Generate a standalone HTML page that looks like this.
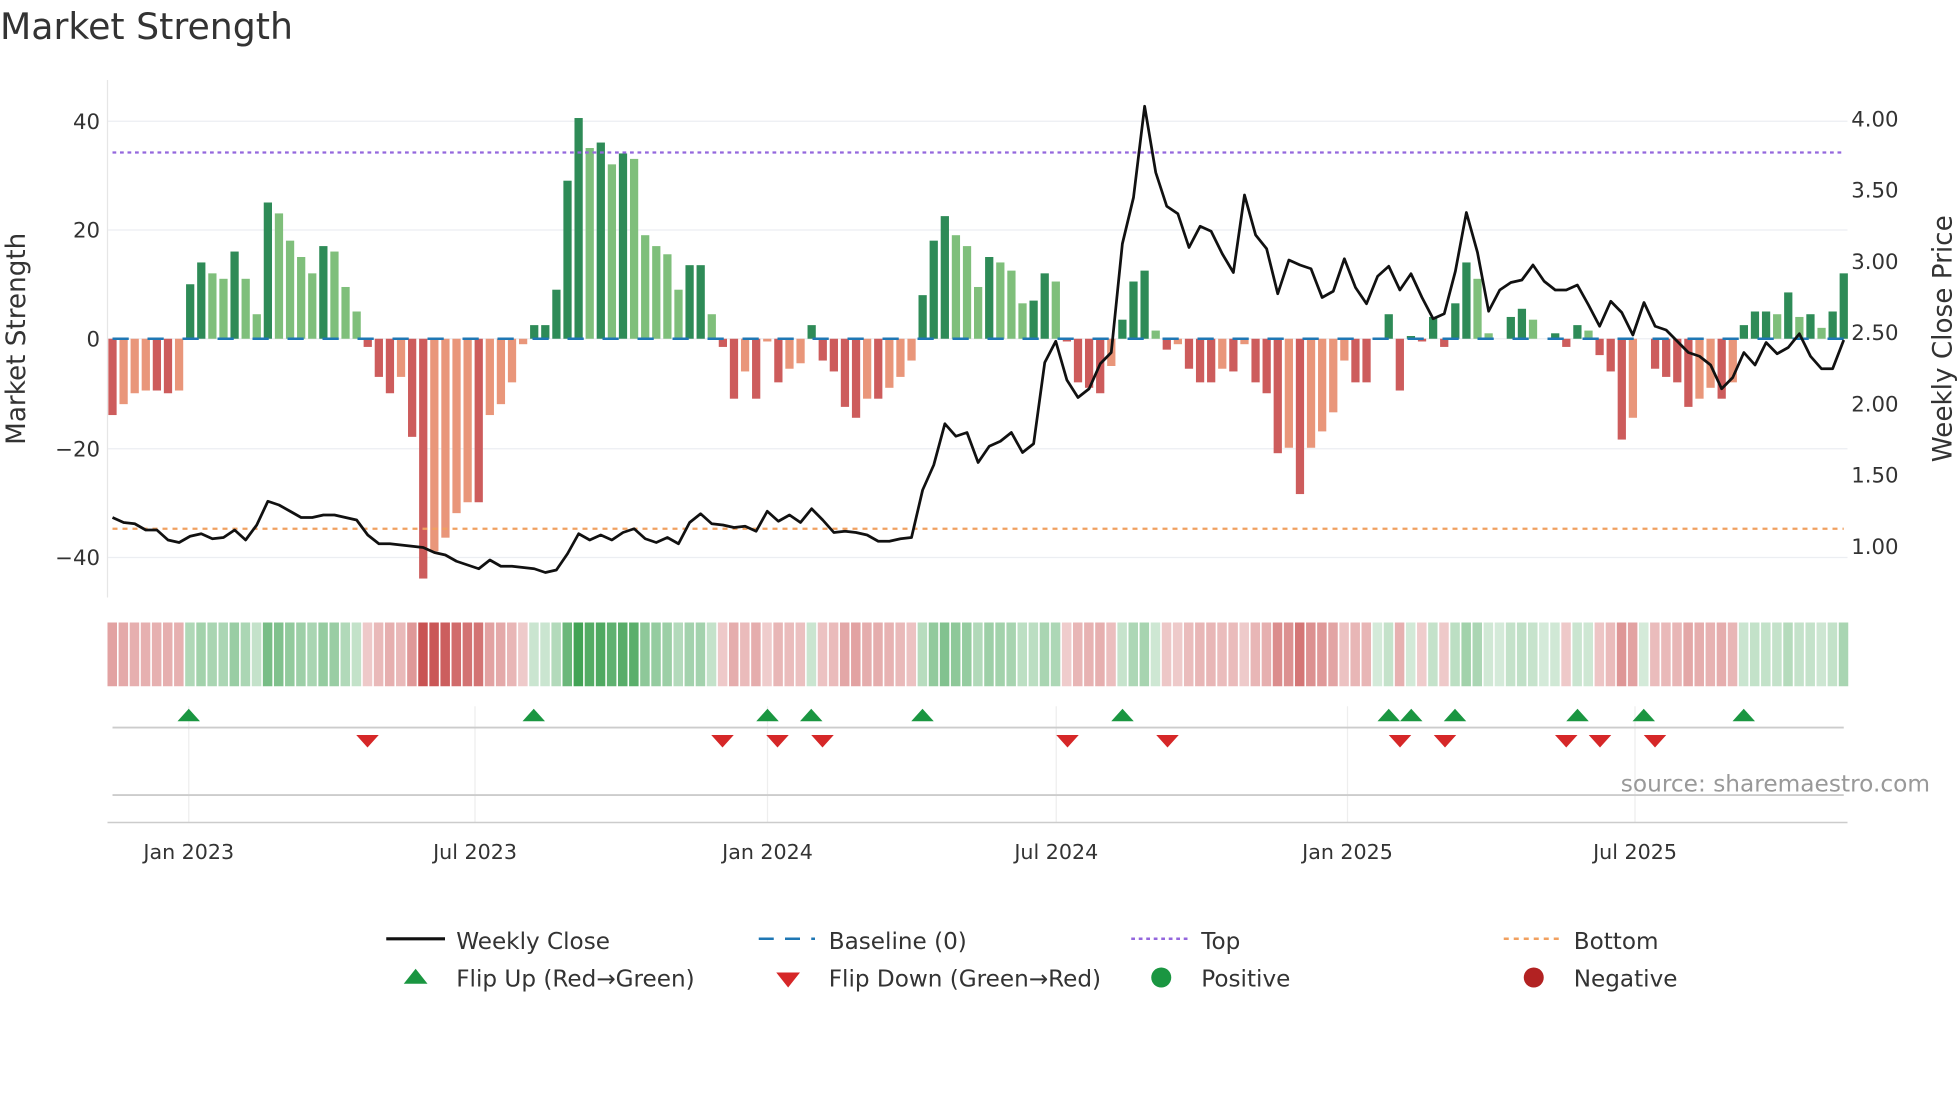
<!DOCTYPE html>
<html><head><meta charset="utf-8"><style>
html,body{margin:0;padding:0;background:#fff;width:1960px;height:1102px;overflow:hidden}
svg{display:block}
text{font-family:"DejaVu Sans","Liberation Sans",sans-serif;fill:#333}
</style></head><body>
<svg id="c" width="1960" height="1102" viewBox="0 0 1568 881.6" xmlns="http://www.w3.org/2000/svg"></svg>
<script>
const V=[-14,-12,-10,-9.5,-9.5,-10,-9.5,10,14,12,11,16,11,4.5,25,23,18,15,12,17,16,9.5,5,-1.5,-7,-10,-7,-18,-44,-39,-36.5,-32,-30,-30,-14,-12,-8,-1,2.5,2.5,9,29,40.5,35,36,32,34,33,19,17,15.5,9,13.5,13.5,4.5,-1.5,-11,-6,-11,-0.5,-8,-5.5,-4.5,2.5,-4,-6,-12.5,-14.5,-11,-11,-9,-7,-4,8,18,22.5,19,17,9.5,15,14,12.5,6.5,7,12,10.5,-0.5,-8,-9,-10,-5,3.5,10.5,12.5,1.5,-2,-1,-5.5,-8,-8,-5.5,-6,-1,-8,-10,-21,-20,-28.5,-20,-17,-13.5,-4,-8,-8,0,4.5,-9.5,0.5,-0.5,4,-1.5,6.5,14,11,1,0,4,5.5,3.5,0,1,-1.5,2.5,1.5,-3,-6,-18.5,-14.5,0,-5.5,-7,-8,-12.5,-11,-9,-11,-8,2.5,5,5,4.5,8.5,4,4.5,2,5,12];
const P=[414,418,419,424,424,432,434,429,427,431,430,424,432,420,401,404,409,414,414,412,412,414,416,428,435,435,436,437,438,442,444,449,452,455,448,453,453,454,455,458,456,443,427,432,428,432,426,423,431,434,430,435,418,411,419,420,422,421,425,409,417,412,418,407,416,426,425,426,428,433,433,431,430,392,372,339,349,346,370,357,353,346,362,355,290,273,304,318,311,291,282,195,158,85,138,165,171,198,181,185,203,218,156,188,199,235,208,212,215,238,233,207,230,243,221,213,232,219,238,255,251,217,170,202,249,232,226,224,212,225,232,232,228,244,261,241,250,268,242,261,264,273,282,285,292,311,302,282,292,274,283,278,267,285,295,295,272];
const N=V.length, x0=90, dx=(1475-90)/(N-1);
const Y=v=>271-v*4.36;
let s='';
s+='<text x="0" y="31" font-size="29">Market Strength</text>';
[[40,97],[20,184],[0,271],[-20,359],[-40,446]].forEach(([v,y])=>{
 s+=`<line x1="86" x2="1478" y1="${y}" y2="${y}" stroke="#eceef2" stroke-width="1"/>`;
 s+=`<text x="80" y="${y+6}" font-size="17" text-anchor="end">${v<0?'\u2212'+(-v):v}</text>`;});
[['4.00',95],['3.50',152],['3.00',209],['2.50',266],['2.00',323],['1.50',380],['1.00',437]].forEach(([t,y])=>{
 s+=`<text x="1481" y="${y+6}" font-size="17">${t}</text>`;});
s+='<line x1="86" x2="86" y1="64" y2="478" stroke="#e6e6e6"/>';
s+='<text transform="translate(20,271) rotate(-90)" font-size="21" text-anchor="middle">Market Strength</text>';
s+='<text transform="translate(1561,271) rotate(-90)" font-size="21" text-anchor="middle">Weekly Close Price</text>';
let prev=0;
V.forEach((v,i)=>{const x=x0+i*dx;let c;
 if(v>=0){c=(v>=prev)?'#2e8b57':'#7fbf7b';}else{c=(v<=prev)?'#cd5c5c':'#e9967a';}
 if(Math.abs(v)>0.2){const y1=Math.min(Y(v),271),h=Math.abs(Y(v)-271);
 s+=`<rect x="${x-3.3}" y="${y1}" width="6.6" height="${h}" fill="${c}"/>`;}
 prev=v;});
s+='<line x1="90" x2="1475" y1="271" y2="271" stroke="#1f77b4" stroke-width="2" stroke-dasharray="13,15"/>';
s+='<line x1="90" x2="1475" y1="122" y2="122" stroke="#9467dd" stroke-width="1.8" stroke-dasharray="3,3"/>';
s+='<line x1="90" x2="1475" y1="423" y2="423" stroke="#f0a060" stroke-width="1.8" stroke-dasharray="4,4"/>';
s+='<polyline fill="none" stroke="#111" stroke-width="2.2" stroke-linejoin="round" points="'+P.map((p,i)=>(x0+i*dx).toFixed(1)+','+p).join(' ')+'"/>';
V.forEach((v,i)=>{const x=x0+i*dx;const m=Math.min(Math.abs(v)/40,1);
 const c=v>=0?`rgba(60,160,80,${(0.22+0.75*m).toFixed(2)})`:`rgba(200,80,80,${(0.28+0.7*m).toFixed(2)})`;
 s+=`<rect x="${x-4}" y="498" width="7.6" height="51" fill="${c}"/>`;});
[151,380,614,845,1078,1308].forEach(x=>{s+=`<line x1="${x}" x2="${x}" y1="565" y2="658" stroke="#eeeeee"/>`;});
s+='<line x1="90" x2="1475" y1="582" y2="582" stroke="#cccccc" stroke-width="1.5"/>';
s+='<line x1="90" x2="1475" y1="636" y2="636" stroke="#cccccc" stroke-width="1.5"/>';
s+='<line x1="86" x2="1478" y1="658" y2="658" stroke="#cccccc" stroke-width="1.2"/>';
[151,427,614,649,738,898,1111,1129,1164,1262,1315,1395].forEach(x=>{s+=`<path d="M${x-9} 577 L${x+9} 577 L${x} 567 Z" fill="#1a9641"/>`;});
[294,578,622,658,854,934,1120,1156,1253,1280,1324].forEach(x=>{s+=`<path d="M${x-9} 588 L${x+9} 588 L${x} 598 Z" fill="#d62728"/>`;});
s+='<text x="1544" y="633" font-size="18.6" text-anchor="end" style="fill:#999">source: sharemaestro.com</text>';
[['Jan 2023',151],['Jul 2023',380],['Jan 2024',614],['Jul 2024',845],['Jan 2025',1078],['Jul 2025',1308]].forEach(([t,x])=>{
 s+=`<text x="${x}" y="687" font-size="16.5" text-anchor="middle">${t}</text>`;});
s+='<line x1="309" x2="356" y1="751" y2="751" stroke="#111" stroke-width="2.5"/><text x="365" y="759" font-size="18.5">Weekly Close</text>';
s+='<line x1="607" x2="652" y1="751" y2="751" stroke="#1f77b4" stroke-width="2" stroke-dasharray="12,9"/><text x="663" y="759" font-size="18.5">Baseline (0)</text>';
s+='<line x1="905" x2="950" y1="751" y2="751" stroke="#9467dd" stroke-width="2" stroke-dasharray="3,3"/><text x="961" y="759" font-size="18.5">Top</text>';
s+='<line x1="1203" x2="1248" y1="751" y2="751" stroke="#f0a060" stroke-width="2" stroke-dasharray="4,4"/><text x="1259" y="759" font-size="18.5">Bottom</text>';
s+='<path d="M323 787 L342 787 L332.5 775 Z" fill="#1a9641"/><text x="365" y="789" font-size="18.5">Flip Up (Red→Green)</text>';
s+='<path d="M621 778 L640 778 L630.5 790 Z" fill="#d62728"/><text x="663" y="789" font-size="18.5">Flip Down (Green→Red)</text>';
s+='<circle cx="929" cy="782" r="8" fill="#1a9641"/><text x="961" y="789" font-size="18.5">Positive</text>';
s+='<circle cx="1227" cy="782" r="8" fill="#b22222"/><text x="1259" y="789" font-size="18.5">Negative</text>';
document.getElementById('c').innerHTML=s;
</script>
</body></html>
